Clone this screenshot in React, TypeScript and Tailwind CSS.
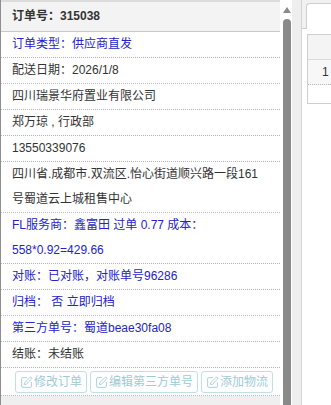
import React from "react";
import { SquarePen } from "lucide-react";

type Row = { text: string; blue?: boolean };

const rows: Row[] = [
  { text: "订单类型：供应商直发", blue: true },
  { text: "配送日期：2026/1/8" },
  { text: "四川瑞景华府置业有限公司" },
  { text: "郑万琼 , 行政部" },
  { text: "13550339076" },
  { text: "四川省.成都市.双流区.怡心街道顺兴路一段161号蜀道云上城租售中心" },
  { text: "FL服务商：鑫富田 过单 0.77 成本：558*0.92=429.66", blue: true },
  { text: "对账：已对账，对账单号96286", blue: true },
  { text: "归档： 否 立即归档", blue: true },
  { text: "第三方单号：蜀道beae30fa08", blue: true },
  { text: "结账：未结账" },
];

const buttons = ["修改订单", "编辑第三方单号", "添加物流"];

export default function App() {
  return (
    <div className="flex w-[331px] h-[405px] overflow-hidden bg-white font-['Liberation_Sans','Noto_Sans_CJK_SC',sans-serif] text-[12px] text-[#333]">
      {/* Left panel */}
      <div className="w-[280px] shrink-0 border-l border-[#8f8f8f] flex flex-col bg-[#efefef]">
        <div className="border-t-2 border-t-[#dcdcdc] border-b border-b-[#c8c8c8] bg-[#f3f3f3] pl-[11px] leading-[29px] font-bold text-[#333]">
          订单号：315038
        </div>
        {rows.map((r, i) => (
          <div
            key={i}
            className={
              r.blue
                ? "bg-white pl-[11px] pr-[14px] leading-[25px] border-b border-dotted border-[#b5b5b5] text-[#2424c8]"
                : "bg-white pl-[11px] pr-[14px] leading-[25px] border-b border-dotted border-[#b5b5b5] text-[#333]"
            }
          >
            {r.text}
          </div>
        ))}
        <div className="bg-white pl-[14px] pt-[3px] pb-[2px] border-b border-dotted border-[#b5b5b5] flex gap-[3px]">
          {buttons.map((b) => (
            <div
              key={b}
              className="h-[22px] flex items-center gap-[1px] px-[4px] border border-[#c0dfe6] rounded-[3px] text-[#9fcad6] text-[12px]"
            >
              <SquarePen size={13} strokeWidth={1.6} />
              <span>{b}</span>
            </div>
          ))}
        </div>
        <div className="flex-1 bg-[#efefef]" />
      </div>

      {/* Scrollbar */}
      <div className="w-[12px] shrink-0 bg-white flex flex-col pl-[3px] pt-[7px]">
        <svg width="8" height="6" viewBox="0 0 8 6" className="block">
          <polygon points="4,0 8,6 0,6" fill="#8a8a8a" />
        </svg>
        <div className="mt-[6px] w-[8px] flex-1 bg-[#8a8a8a] rounded-t-full" />
      </div>

      {/* Right area */}
      <div className="flex-1 flex bg-[#eeeeee]">
        <div className="w-[9px] shrink-0 bg-[#eeeeee]" />
        <div className="flex-1 border-l border-[#d4d4d4] bg-white flex flex-col">
          <div className="h-[29px] bg-[#f1f1f1] border-b border-[#cfcfcf] flex items-end pl-[4px]">
            <div className="w-full h-[26px] -mb-px bg-white border-l border-t border-[#cfcfcf] rounded-tl-[4px]" />
          </div>
          <div className="mt-[5px] ml-[5px] border-l border-t border-b border-[#cfcfcf] flex flex-col">
            <div className="h-[25px] bg-[#f4f4f4] border-b border-[#dcdcdc]" />
            <div className="h-[25px] bg-[#f7f7f7] border-b border-dotted border-[#b5b5b5] flex items-center pl-[14px] text-[#333]">
              1
            </div>
            <div className="h-[18px] bg-white" />
          </div>
        </div>
      </div>
    </div>
  );
}
